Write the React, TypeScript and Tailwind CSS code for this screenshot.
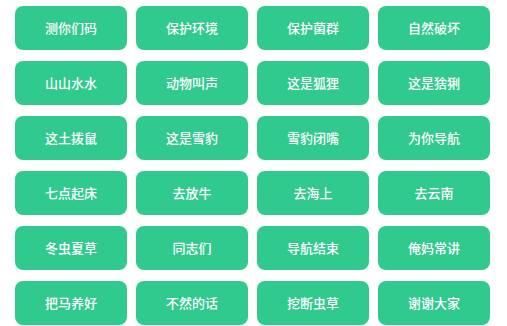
import React from 'react';

const labels = [
  '测你们码', '保护环境', '保护菌群', '自然破坏',
  '山山水水', '动物叫声', '这是狐狸', '这是猞猁',
  '这土拨鼠', '这是雪豹', '雪豹闭嘴', '为你导航',
  '七点起床', '去放牛', '去海上', '去云南',
  '冬虫夏草', '同志们', '导航结束', '俺妈常讲',
  '把马养好', '不然的话', '挖断虫草', '谢谢大家',
];

function Tile({ text }: { text: string }) {
  return (
    <button className="h-[44px] rounded-[8px] bg-[#30c98e] text-white text-[13px] font-medium flex items-center justify-center">
      {text}
    </button>
  );
}

export default function App() {
  return (
    <div
      className="w-[507px] h-[326px] bg-white overflow-hidden pt-[6px] pl-[15px] pr-[17px]"
      style={{ fontFamily: '"Noto Sans CJK SC", "Noto Sans", sans-serif' }}
    >
      <div className="grid grid-cols-4 gap-x-[9px] gap-y-[11px]">
        {labels.map((label, i) => (
          <Tile key={i} text={label} />
        ))}
      </div>
    </div>
  );
}
